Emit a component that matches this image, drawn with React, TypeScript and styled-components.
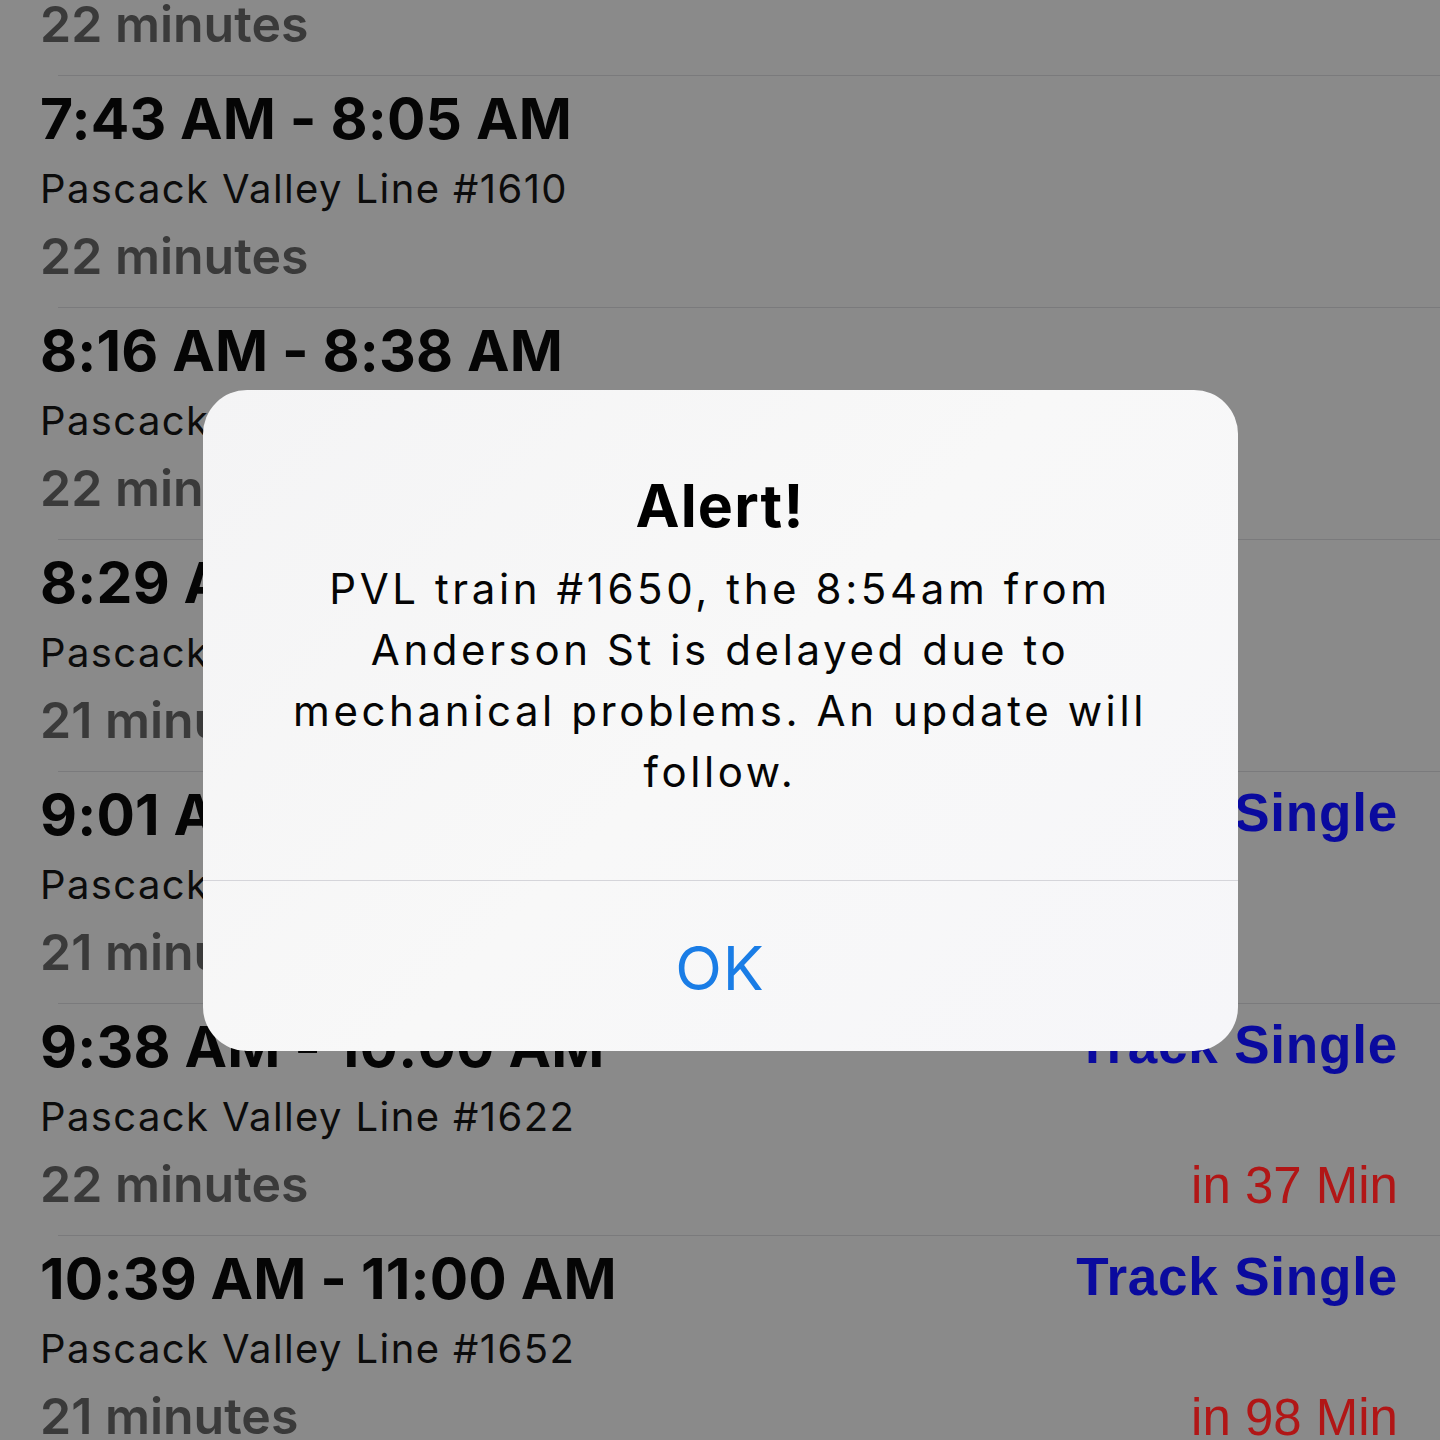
import React from "react";
import styled, { createGlobalStyle } from "styled-components";

const GlobalStyle = createGlobalStyle`
  html, body {
    margin: 0;
    padding: 0;
    background: #8a8a8a;
    overflow: hidden;
  }
  body {
    width: 1440px;
    height: 1440px;
    font-family: "Inter", "Noto Sans", sans-serif;
  }
`;

const Screen = styled.div`
  position: relative;
  width: 1440px;
  height: 1440px;
  overflow: hidden;
  background: #8a8a8a;
`;

const List = styled.div`
  display: flex;
  flex-direction: column;
  margin-top: -155.6px;
`;

const Row = styled.div`
  display: flex;
  justify-content: space-between;
  height: 230.6px;
  box-sizing: border-box;
  padding: 8px 42px 0 40px;
`;

const Separator = styled.div`
  height: 1.4px;
  margin-left: 58px;
  background: #7a7a7c;
`;

const LeftCol = styled.div`
  display: flex;
  flex-direction: column;
`;

const RightCol = styled.div`
  display: flex;
  flex-direction: column;
  justify-content: space-between;
  align-items: flex-end;
  height: 205px;
`;

const TimeRange = styled.div`
  font-family: "Inter", sans-serif;
  font-weight: 700;
  font-size: 57px;
  line-height: 70px;
  color: #050505;
  letter-spacing: 0.2px;
  white-space: nowrap;
`;

const LineName = styled.div`
  font-family: "Inter", sans-serif;
  font-weight: 400;
  font-size: 40px;
  line-height: 70px;
  color: #0c0c0c;
  letter-spacing: 1.4px;
  white-space: nowrap;
`;

const Duration = styled.div`
  font-family: "Inter", sans-serif;
  font-weight: 600;
  font-size: 50px;
  line-height: 65px;
  color: #3a3a3a;
  letter-spacing: 0px;
  white-space: nowrap;
`;

const Track = styled.div`
  font-family: "Liberation Sans", Arial, sans-serif;
  font-weight: 700;
  font-size: 53px;
  line-height: 66px;
  color: #0a0a9e;
  letter-spacing: 0.8px;
  white-space: nowrap;
`;

const Eta = styled.div`
  font-family: "Liberation Sans", Arial, sans-serif;
  font-weight: 400;
  font-size: 51px;
  line-height: 63px;
  color: #b11616;
  white-space: nowrap;
`;

const Overlay = styled.div`
  position: absolute;
  inset: 0;
  display: flex;
  align-items: center;
  justify-content: center;
`;

const AlertBox = styled.div`
  width: 1035px;
  height: 661px;
  border-radius: 44px;
  background: linear-gradient(135deg, #f4f4f5 0%, #f8f8f8 50%, #f6f6f9 100%);
  display: flex;
  flex-direction: column;
  overflow: hidden;
`;

const AlertBody = styled.div`
  height: 491px;
  box-sizing: border-box;
  padding-top: 81px;
  display: flex;
  flex-direction: column;
  align-items: center;
  border-bottom: 1.5px solid #d5d5da;
`;

const AlertTitle = styled.div`
  font-family: "Inter", sans-serif;
  font-weight: 700;
  font-size: 59px;
  line-height: 70px;
  color: #000;
  letter-spacing: 1.2px;
`;

const AlertMessage = styled.div`
  margin-top: 17px;
  font-family: "Inter", sans-serif;
  font-weight: 400;
  font-size: 42px;
  line-height: 61px;
  color: #050505;
  text-align: center;
  letter-spacing: 3.6px;
  white-space: nowrap;
`;

const AlertButton = styled.div`
  flex: 1;
  display: flex;
  align-items: center;
  justify-content: center;
  font-family: "Inter", sans-serif;
  font-weight: 400;
  font-size: 61px;
  color: #1a7de6;
  letter-spacing: 1px;
  padding-top: 4px;
`;

type Trip = {
  time: string;
  line: string;
  duration: string;
  track?: string;
  eta?: string;
};

const trips: Trip[] = [
  { time: "7:11 AM - 7:33 AM", line: "Pascack Valley Line #1608", duration: "22 minutes" },
  { time: "7:43 AM - 8:05 AM", line: "Pascack Valley Line #1610", duration: "22 minutes" },
  { time: "8:16 AM - 8:38 AM", line: "Pascack Valley Line #1614", duration: "22 minutes" },
  { time: "8:29 AM - 8:50 AM", line: "Pascack Valley Line #1616", duration: "21 minutes" },
  { time: "9:01 AM - 9:22 AM", line: "Pascack Valley Line #1618", duration: "21 minutes", track: "Track Single" },
  { time: "9:38 AM - 10:00 AM", line: "Pascack Valley Line #1622", duration: "22 minutes", track: "Track Single", eta: "in 37 Min" },
  { time: "10:39 AM - 11:00 AM", line: "Pascack Valley Line #1652", duration: "21 minutes", track: "Track Single", eta: "in 98 Min" },
];

export default function App() {
  return (
    <>
      <GlobalStyle />
      <Screen>
        <List>
          {trips.map((t, i) => (
            <React.Fragment key={i}>
              <Row>
                <LeftCol>
                  <TimeRange>{t.time}</TimeRange>
                  <LineName>{t.line}</LineName>
                  <Duration>{t.duration}</Duration>
                </LeftCol>
                <RightCol>
                  <Track>{t.track ?? "\u00a0"}</Track>
                  <Eta>{t.eta ?? "\u00a0"}</Eta>
                </RightCol>
              </Row>
              <Separator />
            </React.Fragment>
          ))}
        </List>
        <Overlay>
          <AlertBox>
            <AlertBody>
              <AlertTitle>Alert!</AlertTitle>
              <AlertMessage>
                PVL train #1650, the 8:54am from
                <br />
                Anderson St is delayed due to
                <br />
                mechanical problems. An update will
                <br />
                follow.
              </AlertMessage>
            </AlertBody>
            <AlertButton>OK</AlertButton>
          </AlertBox>
        </Overlay>
      </Screen>
    </>
  );
}
